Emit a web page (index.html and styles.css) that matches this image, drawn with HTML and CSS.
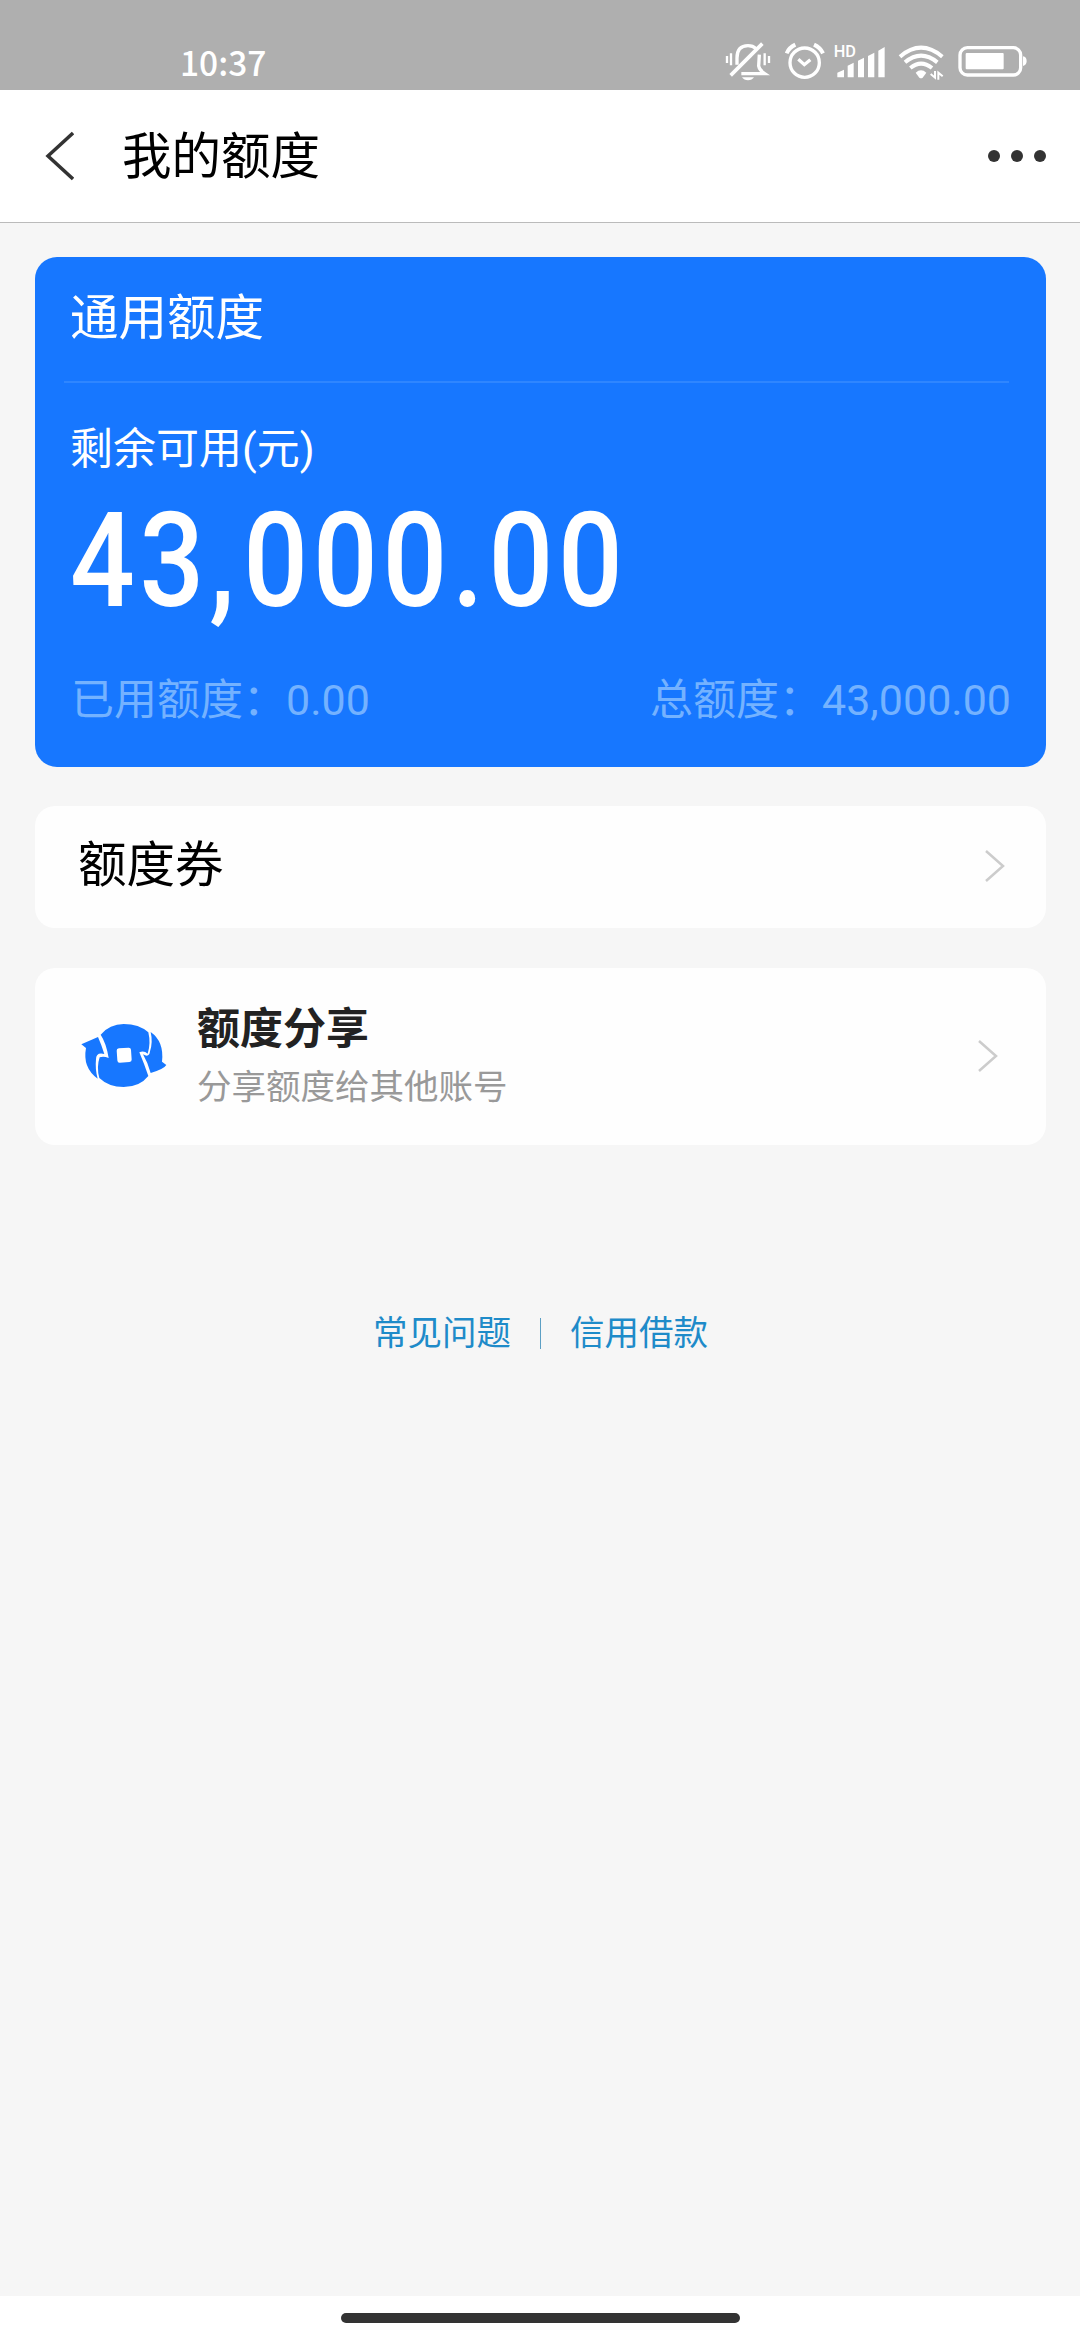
FILE: index.html
```html
<!DOCTYPE html>
<html lang="zh-CN">

<head>
    <meta charset="UTF-8">
    <title>我的额度</title>
    <link rel="stylesheet" href="styles.css">
</head>

<body>
    <!--状态栏-->
    <div class="status">
        <span class="time">10:37</span>
        <div class="status-icons">
            <svg class="ico-mute" width="46" height="40" viewBox="72 68 138 120">
                <g fill="none" stroke="#fff">
                    <path d="M108 136v-20q0-37 33-37q15 0 24 9M175 106l-2 34q2 12 18 23H121" stroke-width="10" />
                    <path d="M89 168L184 73" stroke-width="11" />
                    <path d="M78 110v21M90 102v36M191 102v36M204 110v21" stroke-width="7" />
                </g>
                <path d="M123 174h36q-6 9-18 9t-18-9z" fill="#fff" />
            </svg>
            <svg class="ico-alarm" width="40" height="40" viewBox="251 68 120 120">
                <g fill="none" stroke="#fff" stroke-width="10">
                    <circle cx="310" cy="130" r="44" />
                    <path d="M256 102q7-17 26-26M338 76q19 9 27 26" stroke-width="12" />
                    <path d="M291 120l18 16l18-15" />
                </g>
            </svg>
            <svg class="ico-signal" width="51" height="40" viewBox="400 68 153 120">
                <text class="hd" x="399" y="114">HD</text>
                <path d="M410 174v-14l20-9v23zM441 174v-35l18-9v44zM472 174v-50l18-9v59zM502 174v-64l19-10v74zM533 174v-80l19-11v91z" fill="#fff" />
            </svg>
            <svg class="ico-wifi" width="47" height="40" viewBox="590 68 141 120">
                <g fill="none" stroke="#fff" stroke-width="12">
                    <path d="M596 112q63-54 127 0" />
                    <path d="M611 129q48-40 97 0" />
                    <path d="M627 146q32-26 65 0" />
                </g>
                <path d="M643 160q16-14 32 0l-11 15q-5 4-10 0z" fill="#fff" />
                <path d="M701 155v20l-13-11M711 181v-21l13 11" fill="none" stroke="#fff" stroke-width="6" />
            </svg>
            <svg class="ico-battery" width="69" height="40" viewBox="772 68 207 120">
                <rect x="778" y="85" width="182" height="82" rx="22" fill="none" stroke="#fff" stroke-width="10" />
                <rect x="795" y="101" width="114" height="49" rx="3" fill="#fff" />
                <path d="M967 111q11 2 11 14t-11 15z" fill="#fff" />
            </svg>
        </div>
    </div>

    <!--标题栏-->
    <div class="header">
        <svg class="back" width="30" height="50" viewBox="0 0 30 50">
            <path d="M29 2L4 25L29 48" fill="none" stroke="#333" stroke-width="3.500" />
        </svg>
        <h1>我的额度</h1>
        <div class="more"><i></i><i></i><i></i></div>
    </div>

    <div class="main">
        <!--额度卡片-->
        <div class="card">
            <h2>通用额度</h2>
            <div class="line"></div>
            <p class="label">剩余可用(元)</p>
            <p class="money">43<span class="comma">,</span>000.00</p>
            <div class="detail">
                <span>已用额度：0.00</span>
                <span>总额度：43,000.00</span>
            </div>
        </div>

        <!--额度券-->
        <div class="row coupon">
            <span class="name">额度券</span>
            <svg class="arrow" width="20" height="32" viewBox="0 0 20 32">
                <path d="M1 1L18 16L1 31" fill="none" stroke="#ccc" stroke-width="2.500" />
            </svg>
        </div>

        <!--额度分享-->
        <div class="row share">
            <svg class="coin" width="86" height="66" viewBox="62 71 258 198">
                <g fill="#1777ff">
                    <path d="M121 106Q148 74 190 74Q236 74 264 99Q272 133 262 163Q251 153 237 159Q251 192 264 230Q238 263 190 263Q145 263 117 236Q108 204 118 174Q130 170 145 176Q138 132 121 106z" />
                    <path d="M63 135L113 113Q124 138 132 164Q107 158 107 180Q104 210 112 238Q66 205 77 146z" />
                    <path d="M271 98Q312 127 305 187L318 197Q311 209 271 221Q263 191 248 165Q267 176 269 156Q278 128 271 98z" />
                </g>
                <rect x="170" y="146" width="43" height="43" rx="7" fill="#fff" transform="rotate(-4 191 167)" />
            </svg>
            <div class="info">
                <h3>额度分享</h3>
                <p>分享额度给其他账号</p>
            </div>
            <svg class="arrow" width="20" height="32" viewBox="0 0 20 32">
                <path d="M1 1L18 16L1 31" fill="none" stroke="#ccc" stroke-width="2.500" />
            </svg>
        </div>

        <!--底部链接-->
        <div class="links">
            <a>常见问题</a>
            <i></i>
            <a>信用借款</a>
        </div>
    </div>

    <div class="home"><i></i></div>
</body>

</html>
```
FILE: styles.css
```css
* {
    padding: 0;
    margin: 0;
    box-sizing: border-box;
}

body {
    display: flex;
    flex-direction: column;
    width: 1080px;
    height: 2340px;
    overflow: hidden;
    background: #f6f6f6;
    font-family: Roboto, "Noto Sans CJK SC", sans-serif;
    color: #000;
}

svg {
    display: block;
    flex: none;
}

h1,
h2,
h3 {
    font-weight: normal;
}

/*状态栏*/
.status {
    display: flex;
    justify-content: space-between;
    height: 90px;
    padding: 42px 53px 0 180px;
    background: #afafaf;
    color: #fff;
}

.time {
    font: 500 33.500px/39px "Noto Sans CJK SC", sans-serif;
}

.status-icons {
    display: flex;
}

.ico-alarm {
    margin-left: 14px;
}

.ico-signal {
    margin-left: 9px;
}

.ico-wifi {
    margin-left: 13px;
}

.ico-battery {
    margin-left: 13px;
}

.hd {
    font: 500 49px Roboto, sans-serif;
    fill: #fff;
}

/*标题栏*/
.header {
    display: flex;
    align-items: center;
    height: 133px;
    padding: 0 34px 0 44px;
    background: #fff;
    border-bottom: 1px solid #bbb;
}

.header h1 {
    margin-left: 48px;
    padding-top: 2px;
    font-size: 49.500px;
    line-height: 60px;
}

.more {
    display: flex;
    gap: 11px;
    margin-left: auto;
}

.more i {
    width: 12px;
    height: 12px;
    border-radius: 50%;
    background: #333;
}

.main {
    flex: 1;
    padding: 34px 34px 0 35px;
}

/*额度卡片*/
.card {
    height: 510px;
    padding: 32px 35px 0;
    border-radius: 22px;
    background: #1777ff;
    color: #fff;
}

.card h2 {
    height: 60px;
    font-size: 48.500px;
    line-height: 60px;
}

.line {
    height: 2px;
    margin: 32px 2px 0 -6px;
    background: #2f86ff;
}

.label {
    margin-top: 36px;
    font-size: 43px;
    line-height: 60px;
}

/*数字压窄，接近DIN字体*/
.money {
    height: 130px;
    margin-top: 17px;
    font-size: 131px;
    font-weight: 500;
    line-height: 130px;
    letter-spacing: 5.500px;
    transform: scaleX(.87);
    transform-origin: 0 0;
}

.comma {
    letter-spacing: 10px;
}

.detail {
    display: flex;
    justify-content: space-between;
    margin-top: 44px;
    padding-left: 1px;
    font-size: 43px;
    line-height: 60px;
    color: #74b2ff;
}

/*白色行*/
.row {
    display: flex;
    align-items: center;
    border-radius: 20px;
    background: #fefefe;
}

.arrow {
    margin-left: auto;
}

.coupon {
    height: 122px;
    margin-top: 39px;
    padding: 0 41px 3px 43px;
}

.coupon .name {
    font-size: 48.500px;
    line-height: 60px;
}

.share {
    height: 177px;
    margin-top: 40px;
    padding: 0 48px 2px 46px;
}

.info {
    margin-left: 30px;
}

.info h3 {
    font-size: 43px;
    font-weight: bold;
    line-height: 60px;
    color: #222;
}

.info p {
    margin-top: 3px;
    font-size: 34.500px;
    line-height: 50px;
    color: #999;
}

/*底部链接*/
.links {
    display: flex;
    justify-content: center;
    align-items: center;
    margin-top: 163px;
    font-size: 34.500px;
    line-height: 50px;
    color: #1e8bc9;
}

.links i {
    width: 1px;
    height: 31px;
    margin: 0 29px;
    background: #5c9fc4;
}

/*手势条*/
.home {
    height: 44px;
    padding-top: 17px;
    background: #fff;
}

.home i {
    display: block;
    width: 399px;
    height: 10px;
    margin: 0 auto;
    border-radius: 5px;
    background: #333;
}
```
